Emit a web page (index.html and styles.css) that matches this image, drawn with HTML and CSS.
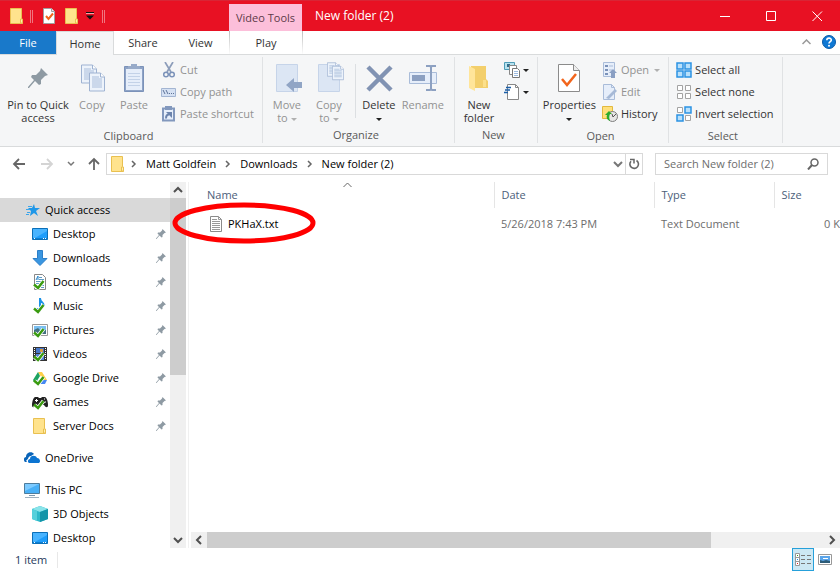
FILE: index.html
```html
<!DOCTYPE html>
<html lang="en">
<head>
<meta charset="utf-8">
<title>New folder (2)</title>
<link rel="stylesheet" href="styles.css">
</head>
<body>
<svg class="defs" aria-hidden="true">
  <symbol id="folder" viewBox="0 0 16 16"><path d="M1.500.500h11v10l1 1v4h-12z" fill="#ffe38d" stroke="#e9c050"/><path d="M11.500 15v-4h2v4z" fill="#fff0b0" stroke="#e9c050"/></symbol>
  <symbol id="pin" viewBox="0 0 20 20"><path d="M13 0 20 7 17 8 13 12 13 16 11 17 7 13 1 20 0 20 0 19 6 12 3 9 4 7 8 7 12 3z" fill="#8e9aa3"/></symbol>
  <symbol id="page" viewBox="0 0 16 19"><path d="M.500.500h11l4 4v14H.500z" fill="#edf3fb" stroke="#9fb3d2"/><path d="M11.500.500v4h4" fill="#fff" stroke="#9fb3d2"/><path d="M3 4.500h7M3 6.500h10M3 8.500h10M3 10.500h10M3 12.500h10M3 14.500h10" stroke="#a9bddb"/></symbol>
  <symbol id="chev-r" viewBox="0 0 8 8"><path d="m2 1 3 3-3 3" fill="none" stroke="#666" stroke-width="1.500"/></symbol>
  <symbol id="monitor" viewBox="0 0 16 16"><path d="M.500 2.500h15v11H.500z" fill="#1e9dfb" stroke="#0b6fb8"/><path d="M1 3h14v2L3 12H1z" fill="#49b4ff"/><path d="M1 12.500h14" stroke="#0c7fd2"/><path d="M2 12.500h1M11 12.500h1M13 12.500h1" stroke="#fff"/></symbol>
  <symbol id="tick" viewBox="0 0 16 16"><path d="m2.500 11 3.500 3 5.500-7" fill="none" stroke="#fff" stroke-width="4"/><path d="m2 10.500 4 3.500 5.500-7" fill="none" stroke="#3a9b10" stroke-width="2.500"/></symbol>
  <symbol id="props" viewBox="0 0 22 28"><path d="M.500.500h15l6 6v21H.500z" fill="#fff" stroke="#8b8b8b"/><path d="M15.500.500v6h6" fill="#eee" stroke="#8b8b8b"/><path d="m4 15 5 6 9-11" fill="none" stroke="#f2651c" stroke-width="2.500"/></symbol>
</svg>

<header class="titlebar">
  <div class="quick">
    <svg class="i16"><use href="#folder"/></svg>
    <span class="grip"></span>
    <button aria-label="Properties"><svg class="i16" viewBox="0 0 16 16"><path d="M2.500.500h8l3 3v12h-11z" fill="#fff" stroke="#a0a0a0"/><path d="M10.500.500v3h3" fill="#eee" stroke="#a0a0a0"/><path d="m5 8 2.500 3L12 5.500" fill="none" stroke="#f2651c" stroke-width="2"/></svg></button>
    <button aria-label="New folder"><svg class="i16"><use href="#folder"/></svg></button>
    <button aria-label="Customize toolbar" class="more"><svg viewBox="0 0 8 8" width="8" height="8"><path d="M0 0h8v1H0z" fill="#111"/><path d="M0 1h8v1H0z" fill="#f6a0a8"/><path d="M0 3.500h8l-4 4z" fill="#111"/></svg></button>
    <span class="grip last"></span>
  </div>
  <div class="context">Video Tools</div>
  <h1>New folder (2)</h1>
  <div class="winbtns">
    <button aria-label="Minimize"><svg viewBox="0 0 11 11"><path d="M0 5.500h10" /></svg></button>
    <button aria-label="Maximize"><svg viewBox="0 0 11 11"><path d="M.500.500h9v9h-9z"/></svg></button>
    <button aria-label="Close"><svg viewBox="0 0 11 11"><path d="m.500.500 9.500 9.500M10 .500.500 10"/></svg></button>
  </div>
</header>

<nav class="tabs">
  <button class="file">File</button>
  <button class="home">Home</button>
  <button class="share">Share</button>
  <button class="view">View</button>
  <button class="play">Play</button>
  <button class="collapse" aria-label="Collapse ribbon"><svg width="9" height="6" viewBox="0 0 9 6"><path d="M.500 5 4.500 1l4 4" fill="none" stroke="#999" stroke-width="1.500"/></svg></button>
  <button class="help" aria-label="Help"><svg width="14" height="14" viewBox="0 0 14 14"><circle cx="7" cy="7" r="6.500" fill="#0f78d4" stroke="#0a5ba8"/><path d="M4.800 5.200C4.800 2.500 9.300 2.500 9.300 5 9.300 6.600 7 6.700 7 8.600" fill="none" stroke="#fff" stroke-width="1.600"/><circle cx="7" cy="10.700" r="1" fill="#fff"/></svg></button>
</nav>

<section class="ribbon">
  <div class="group">
    <div class="tools">
      <button class="big w70"><svg viewBox="0 0 32 32"><use href="#pin" x="6" y="6" width="20" height="20"/></svg>Pin to Quick access</button>
      <button class="big w38 off"><svg viewBox="0 0 32 32"><use href="#page" x="5" y="2" width="16" height="20"/><use href="#page" x="13" y="10" width="16" height="20"/></svg>Copy</button>
      <button class="big w46 off"><svg viewBox="0 0 32 32"><path d="M6.500 4.500h19v25h-19z" fill="#8ea3c6" stroke="#7b92b9"/><path d="M8 7h16v21H8z" fill="#e6eefa"/><path d="M10 11.500h12M10 14.500h12M10 17.500h12M10 20.500h12M10 23.500h12" stroke="#c3d2e8"/><path d="M10 7V4h3V2h6v2h3v3z" fill="#98abc9"/></svg>Paste</button>
      <div class="stack">
        <button class="small off"><svg viewBox="0 0 16 16"><path d="m4 0 6 10M12 0 6 10" stroke="#8c9dba" stroke-width="1.700"/><circle cx="5" cy="12.500" r="2.300" fill="none" stroke="#7b92b9" stroke-width="1.500"/><circle cx="11" cy="12.500" r="2.300" fill="none" stroke="#7b92b9" stroke-width="1.500"/></svg>Cut</button>
        <button class="small off"><svg viewBox="0 0 16 16"><path d="M.500 4.500h14v8H.500z" fill="#d5e1f3" stroke="#a3b5d2"/><path d="m2 6 2 4M5 6l2 4M8 9.500h1M10 9.500h1M12 9.500h1" stroke="#5e7397"/></svg>Copy path</button>
        <button class="small off"><svg viewBox="0 0 16 16"><path d="M2 2.500h11v12H2z" fill="#e6eefa" stroke="#8298bd" stroke-width="2"/><path d="M4 0h7v4H4z" fill="#8298bd"/><path d="M5 12.500c0-3 1-4 3-4" fill="none" stroke="#6c84ad" stroke-width="2"/><path d="M5 6h6v6z" fill="#6c84ad"/></svg>Paste shortcut</button>
      </div>
    </div>
    <h2>Clipboard</h2>
  </div>
  <div class="group">
    <div class="tools">
      <button class="big w42 off"><svg viewBox="0 0 32 32"><path d="M5.500 2.500h21v27h-21z" fill="#dce6f4" stroke="#c6d4e9"/><path d="m15 23 8-7v4h8v6h-8v4z" fill="#91a5c5"/></svg>Move<span>to <i class="tri"></i></span></button>
      <button class="big w42 off"><svg viewBox="0 0 32 32"><path d="M5.500 2.500h21v27h-21z" fill="#dce6f4" stroke="#c6d4e9"/><use href="#page" x="14" y="0" width="12" height="15"/><use href="#page" x="19" y="3" width="12" height="16"/></svg>Copy<span>to <i class="tri"></i></span></button>
      <span class="rule"></span>
      <button class="big w42"><svg viewBox="0 0 32 32"><path d="m5 5 23 23M28 5 5 28" stroke="#8193b3" stroke-width="4.500"/></svg>Delete<span><i class="tri"></i></span></button>
      <button class="big w46 off"><svg viewBox="0 0 32 32"><path d="M2.500 10.500h27v11h-27z" fill="#e6eefa" stroke="#a9bcd9"/><path d="M5 13h13v6H5z" fill="#8ca0c1"/><path d="M19 4h4l1 1 1-1h4M19 28h4l1-1 1 1h4M24 4v24" fill="none" stroke="#8ca0c1" stroke-width="2"/></svg>Rename</button>
    </div>
    <h2>Organize</h2>
  </div>
  <div class="group">
    <div class="tools">
      <button class="big w42"><svg viewBox="0 0 32 32"><path d="M8 4h15v13l2 2v7H8z" fill="#f3cf6c"/><path d="m6 4 6 3v22l-6-3z" fill="#ffe59a"/><path d="M20 25v-7h3v7z" fill="#fce08b"/></svg>New folder</button>
      <div class="stack">
        <button class="small" aria-label="New item"><svg viewBox="0 0 16 16"><path d="M.500.500h10v7H.500z" fill="#b8e2ef" stroke="#4e9cb7"/><path d="M3 2h3v3H3z" fill="#326e8c"/><path d="M5.500 3.500h7v9h-7z" fill="#fff" stroke="#888"/><path d="M8.500 6.500h5l2 2v7h-7z" fill="#fff" stroke="#777"/><path d="M10 9.500h4M10 11.500h4M10 13.500h4" stroke="#9dbbe0"/></svg><i class="tri"></i></button>
        <button class="small" aria-label="Easy access"><svg viewBox="0 0 16 16"><path d="M3.500.500h8l3 3v12h-11z" fill="#fff" stroke="#888"/><path d="M11.500.500v3h3" fill="none" stroke="#888"/><path d="M2 3.500h5M1 6h5M0 8.500h4" stroke="#1c5fa8" stroke-width="1.500"/></svg><i class="tri"></i></button>
      </div>
    </div>
    <h2>New</h2>
  </div>
  <div class="group">
    <div class="tools">
      <button class="big w57"><svg viewBox="0 0 32 32"><use href="#props" x="5" y="2" width="22" height="28"/></svg>Properties<span><i class="tri"></i></span></button>
      <div class="stack">
        <button class="small off"><svg viewBox="0 0 16 16"><path d="M1.500.500h11v14h-11z" fill="#e6eefa" stroke="#a9bcd9"/><path d="M3 3h3v2H3zM3 7h3v2H3zM3 11h3v2H3z" fill="#7b92b9"/><path d="M7 4h4M7 8h3" stroke="#a9bcd9"/><path d="m11 7 4 4h-2v5h-4v-5H7z" fill="#8a9fc3"/></svg>Open<i class="tri"></i></button>
        <button class="small off"><svg viewBox="0 0 16 16"><path d="M1.500.500h8l3 3v12h-11z" fill="#e6eefa" stroke="#a9bcd9"/><path d="M9.500.500v3h3" fill="none" stroke="#a9bcd9"/><path d="m4 14 9-9 2 2-8 8z" fill="#a6b9d6"/></svg>Edit</button>
        <button class="small"><svg viewBox="0 0 16 16"><path d="M.500.500h10v12H.500z" fill="#ffe07b" stroke="#e2b93e"/><circle cx="10.500" cy="10.500" r="5" fill="#e6e6e6" stroke="#7d7d7d"/><path d="m10 8 1 3 3-3" fill="none" stroke="#555"/><path d="M8 15c-3-1-4-3-3-6H3l4-4 3 3H8c-1 2-1 4 0 7z" fill="#2cab2c"/></svg>History</button>
      </div>
    </div>
    <h2>Open</h2>
  </div>
  <div class="group">
    <div class="tools">
      <div class="stack">
        <button class="small"><svg viewBox="0 0 16 16"><path d="M1 1h6v6H1zM9 1h6v6H9zM1 9h6v6H1zM9 9h6v6H9z" fill="#b9e0fb" stroke="#2b92e4" stroke-width="1.500"/></svg>Select all</button>
        <button class="small"><svg viewBox="0 0 16 16"><path d="M1.500 1.500h5v5h-5zM9.500 1.500h5v5h-5zM1.500 9.500h5v5h-5zM9.500 9.500h5v5h-5z" fill="#fff" stroke="#a3a3a3"/></svg>Select none</button>
        <button class="small"><svg viewBox="0 0 16 16"><path d="M1.500 1.500h5v5h-5zM9.500 9.500h5v5h-5z" fill="#fff" stroke="#a3a3a3"/><path d="M9 1h6v6H9zM1 9h6v6H1z" fill="#b9e0fb" stroke="#2b92e4" stroke-width="1.500"/></svg>Invert selection</button>
      </div>
    </div>
    <h2>Select</h2>
  </div>
</section>

<section class="address">
  <div class="arrows">
    <button aria-label="Back"><svg viewBox="0 0 14 14"><path d="M13 7H2M7 2 2 7l5 5" fill="none" stroke="#666" stroke-width="1.800"/></svg></button>
    <button aria-label="Forward"><svg viewBox="0 0 14 14"><path d="M1 7h11M7 2l5 5-5 5" fill="none" stroke="#d4d4d4" stroke-width="1.800"/></svg></button>
    <button class="recent" aria-label="Recent locations"><svg viewBox="0 0 8 14"><path d="m1 5 3 3 3-3" fill="none" stroke="#777" stroke-width="1.500"/></svg></button>
    <button class="up" aria-label="Up"><svg viewBox="0 0 14 14"><path d="M7 13V2M2 7l5-5 5 5" fill="none" stroke="#666" stroke-width="1.800"/></svg></button>
  </div>
  <div class="path">
    <svg class="i16 crumb"><use href="#folder"/></svg>
    <svg class="sep"><use href="#chev-r"/></svg><a href="#matt">Matt Goldfein</a>
    <svg class="sep"><use href="#chev-r"/></svg><a href="#downloads">Downloads</a>
    <svg class="sep"><use href="#chev-r"/></svg><a href="#new">New folder (2)</a>
    <button class="drop" aria-label="Previous locations"><svg width="10" height="8" viewBox="0 0 10 8"><path d="m1 2 4 4 4-4" fill="none" stroke="#777" stroke-width="2"/></svg></button>
    <button class="refresh" aria-label="Refresh"><svg width="12" height="12" viewBox="0 0 12 12"><path d="M8.500 2.500A4.300 4.300 0 1 1 3 3.200" fill="none" stroke="#666" stroke-width="1.600"/><path d="M2 1.500h4v4" fill="none" stroke="#666" stroke-width="1.500"/></svg></button>
  </div>
  <label class="search"><input type="text" aria-label="Search New folder (2)" placeholder="Search New folder (2)"><svg width="12" height="12" viewBox="0 0 12 12"><circle cx="7.500" cy="4.500" r="3.500" fill="none" stroke="#666" stroke-width="1.500"/><path d="M5 7 1 11.500" stroke="#666" stroke-width="2"/></svg></label>
</section>

<main>
  <nav class="side">
    <a class="root active" href="#quick"><svg viewBox="0 0 16 16"><path d="m10 2 1 4h5l-4 3 2 5-4-3-4 3 1-5-3-3h4z" fill="#1f97e8"/><path d="M4 4.500h4M2 7.500h4M3 10.500h3M2 12.500h3" stroke="#3ba5ea"/></svg>Quick access</a>
    <a href="#desktop"><svg><use href="#monitor"/></svg>Desktop<svg class="pin"><use href="#pin"/></svg></a>
    <a href="#downloads"><svg viewBox="0 0 16 16"><path d="M5.500.500h5v8h4.500L8 15.500 1 8.500h4.500z" fill="#3a96e0" stroke="#2c7fc9"/></svg>Downloads<svg class="pin"><use href="#pin"/></svg></a>
    <a href="#documents"><svg viewBox="0 0 16 16"><path d="M2.500.500h8l3 3v12h-11z" fill="#fff" stroke="#888"/><path d="M7 3.500h3M7 5.500h5M4 7.500h8M4 9.500h8M9 11.500h3M9 13.500h3" stroke="#5d9bc5"/><path d="m4 6 2-4v4" fill="none" stroke="#2a87ca"/><use href="#tick"/></svg>Documents<svg class="pin"><use href="#pin"/></svg></a>
    <a href="#music"><svg viewBox="0 0 16 16"><path d="M7 0h2c0 4 5 4 3 9 0-3-2-4-3-4v7c0 4-6 3-5 0 0-2 2-2 3-2z" fill="#1a91e6"/><use href="#tick"/></svg>Music<svg class="pin"><use href="#pin"/></svg></a>
    <a href="#pictures"><svg viewBox="0 0 16 16"><path d="M.500 2.500h15v11H.500z" fill="#fff" stroke="#999"/><path d="M2 4h12v8H2z" fill="#79bff1"/><path d="m2 8 4-2 3 3 5-1v4H2z" fill="#426f80"/><use href="#tick"/></svg>Pictures<svg class="pin"><use href="#pin"/></svg></a>
    <a href="#videos"><svg viewBox="0 0 16 16"><path d="M1 1h14v14H1z" fill="#333"/><path d="M2.500 2v12M13.500 2v12" stroke="#fff" stroke-dasharray="1 1"/><path d="M4 2h8v5H4z" fill="#4777c8"/><path d="M4 8h8v6H4z" fill="#5282d5"/><path d="M8 3h3v3H8z" fill="#d99b45"/><use href="#tick"/></svg>Videos<svg class="pin"><use href="#pin"/></svg></a>
    <a href="#drive"><svg viewBox="0 0 16 16"><path d="M6 2h4l5 8h-4z" fill="#ffcf48"/><path d="m6 2 2 4-5 8-2-4z" fill="#1da362"/><path d="M6 10h9l-2 4H4z" fill="#4688f1"/><use href="#tick"/></svg>Google Drive<svg class="pin"><use href="#pin"/></svg></a>
    <a href="#games"><svg viewBox="0 0 16 16"><path d="M3 3h3l1 1h2l1-1h3c2 1 3 5 3 8 0 3-2 3-4 0H4c-2 3-4 3-4 0 0-3 1-7 3-8z" fill="#222"/><path d="M3 6.500h3M4.500 5v3M10 7h1M12 5h1M13 8h1" stroke="#fff"/><use href="#tick"/></svg>Games<svg class="pin"><use href="#pin"/></svg></a>
    <a href="#server"><svg><use href="#folder"/></svg>Server Docs<svg class="pin"><use href="#pin"/></svg></a>
    <a class="root gap" href="#onedrive"><svg viewBox="0 0 16 16"><path d="M1 12c-2-2-1-5 1-5 0-5 6-6 8-3L7 6c-2 0-3 2-3 3-2 1-2 2-1 3z" fill="#0a64b8"/><path d="M5 13c-2-1-1-4 1-4 0-4 6-4 7-1 3 0 4 4 2 5z" fill="#0c74d1"/></svg>OneDrive</a>
    <a class="root gap" href="#pc"><svg viewBox="0 0 16 16"><path d="M.500 1.500h15v10H.500z" fill="#48b0f7" stroke="#4d7c9c"/><path d="M1 2h14L1 9z" fill="#7ccaff"/><path d="M5 13.500h6" stroke="#7d98ad"/><path d="M1 15.500h14" stroke="#9fb1bf"/></svg>This PC</a>
    <a href="#objects"><svg viewBox="0 0 16 16"><path d="m0 3 8-3 8 3v10l-8 3-8-3z" fill="#2db9c9"/><path d="m0 3 8-3 8 3-8 3z" fill="#8ae4ea"/><path d="m8 6 8-3v10l-8 3z" fill="#1495a9"/><path d="m0 3 5 2v10l-5-2z" fill="#55d0db"/></svg>3D Objects</a>
    <a href="#desktop2"><svg><use href="#monitor"/></svg>Desktop</a>
  </nav>
  <div class="vscroll" aria-hidden="true">
    <svg viewBox="0 0 16 16"><path d="m4 10 4-4 4 4" /></svg>
    <div class="thumb"></div>
    <svg viewBox="0 0 16 16"><path d="m4 6 4 4 4-4" /></svg>
  </div>
  <section class="files">
    <div class="listing">
      <table>
        <colgroup><col class="c1"><col class="c2"><col class="c3"><col class="c4"></colgroup>
        <thead><tr><th>Name<svg class="sort" width="9" height="6" viewBox="0 0 9 6"><path d="M.500 5 4.500 1l4 4" fill="none" stroke="#666"/></svg></th><th>Date</th><th>Type</th><th>Size</th></tr></thead>
        <tbody><tr><td class="name"><span class="marked"><svg viewBox="0 0 16 16" width="16" height="16"><path d="M2.500.500h8l3 3v12h-11z" fill="#fff" stroke="#8b8b8b"/><path d="M10.500.500v3h3M4 3.500h5M4 5.500h8M4 7.500h8M4 9.500h8M4 11.500h8M4 13.500h8" fill="none" stroke="#999"/></svg>PKHaX.txt<svg class="ring" viewBox="0 0 144 42" width="144" height="42"><ellipse cx="72" cy="21" rx="69" ry="18" fill="none" stroke="#f00" stroke-width="5"/></svg></span></td><td>5/26/2018 7:43 PM</td><td>Text Document</td><td class="size">0 KB</td></tr></tbody>
      </table>
    </div>
    <div class="hscroll" aria-hidden="true">
      <svg viewBox="0 0 16 16"><path d="m10 4-4 4 4 4" /></svg>
      <div class="thumb"></div>
      <svg viewBox="0 0 16 16"><path d="m6 4 4 4-4 4" /></svg>
    </div>
  </section>
</main>

<footer>
  <span class="count">1 item</span>
  <button class="details" aria-label="Details view"><svg viewBox="0 0 16 13" width="16" height="13"><path d="M.500.500h4v12h-4zM.500 4.500h4M.500 8.500h4" fill="#fff" stroke="#999"/><path d="M2 2.500h1" stroke="#3a9b10"/><path d="M2 6.500h1" stroke="#1a91e6"/><path d="M2 10.500h1" stroke="#d22"/><path d="M6 2.500h4M12 2.500h4M6 6.500h4M12 6.500h4M6 10.500h4M12 10.500h4" stroke="#777"/></svg></button>
  <button class="thumbs" aria-label="Large icons view"><svg viewBox="0 0 14 11" width="14" height="11"><path d="M.500.500h13v10H.500z" fill="#fff" stroke="#999"/><path d="M2 2h10v7H2z" fill="#5ba5ea"/><path d="m2 6 3 1 3-1 4 1v2H2z" fill="#2c5c78"/><path d="M5 4.500h5" stroke="#fff"/></svg></button>
</footer>
</body>
</html>
```
FILE: styles.css
```css
* { box-sizing: border-box; }
body {
  margin: 0;
  height: 100vh;
  display: flex;
  flex-direction: column;
  overflow: hidden;
  background: #fff;
  color: #000;
  font: 11px/16px "Open Sans", "Noto Sans", sans-serif;
}
button { border: 0; padding: 0; margin: 0; background: none; font: inherit; color: inherit; }
a { color: inherit; text-decoration: none; }
svg { flex: none; display: block; }
h1, h2 { margin: 0; font: inherit; }
.defs { position: absolute; width: 0; height: 0; }
.i16 { width: 16px; height: 16px; }

.titlebar { display: flex; height: 31px; flex: none; background: #e81123; color: #fff; align-items: center; border-top: 1px solid #d92535; }
.quick { display: flex; align-items: center; width: 229px; padding-left: 9px; }
.grip { width: 3px; height: 13px; margin: 0 8px 0 5px; border: solid #f0757f; border-width: 0 1px; }
.grip.last { margin: 0 0 0 8px; }
.quick button + button { margin-left: 7px; }
.quick button.more { margin-left: 6px; }
.context { align-self: flex-end; width: 73px; height: 27px; line-height: 28px; text-align: center; background: #fcbfda; color: #5c3a48; white-space: nowrap; }
h1 { flex: 1; padding-left: 13px; font-size: 12px; }
.winbtns { display: flex; }
.winbtns button { width: 46px; height: 30px; display: grid; place-items: center; }
.winbtns svg { width: 11px; height: 11px; fill: none; stroke: #fff; }

.tabs { display: flex; height: 24px; flex: none; border-bottom: 1px solid #d9dbdc; color: #333; }
.file { width: 56px; background: #1979ca; color: #fff; }
.home { width: 58px; height: 24px; background: #f5f6f7; border: solid #d9dbdc; border-width: 1px 1px 0; }
.share { width: 58px; }
.view { width: 57px; }
.play { width: 74px; border: solid; border-width: 0 1px; border-image: linear-gradient(#bbb, #fff) 1; }
.collapse { margin-left: auto; padding: 0 9px 2px 0; }
.help { padding: 0 4px 2px 2px; }

.ribbon { display: flex; height: 92px; flex: none; background: #f5f6f7; border-bottom: 1px solid #d9dbdc; padding-top: 2px; color: #333; }
.group { display: flex; flex-direction: column; height: 86px; padding: 2px 8px 0 3px; border-right: 1px solid #e0e2e4; white-space: nowrap; }
.tools { display: flex; height: 70px; }
.group h2 { line-height: 22px; text-align: center; color: #5a5a5a; }
.big { display: flex; flex-direction: column; align-items: center; padding-top: 3px; line-height: 13px; white-space: normal; }
.big svg { width: 32px; height: 32px; margin-bottom: 4px; }
.w38 { width: 38px; }
.w42 { width: 42px; }
.w46 { width: 46px; }
.w57 { width: 57px; }
.w70 { width: 70px; }
.off { color: #929292; }
.tri { display: inline-block; border: 3px solid transparent; border-top-color: #222; border-bottom: 0; vertical-align: middle; }
.off .tri { border-top-color: #b0b0b0; }
.stack { display: flex; flex-direction: column; padding-left: 4px; }
.small { display: flex; align-items: center; height: 22px; gap: 3px; }
.small svg { width: 16px; height: 16px; }
.off.small .tri { margin-left: 2px; }
.rule { width: 1px; height: 54px; margin: 5px 2px 0 5px; background: #dcdfe2; }

.address { display: flex; flex: none; align-items: center; height: 35px; padding: 0 12px 1px 0; }
.arrows { display: flex; width: 106px; padding-left: 11px; gap: 12px; }
.arrows button { width: 16px; display: grid; place-items: center; }
.arrows svg { width: 14px; height: 14px; }
.arrows .recent, .arrows .recent svg { width: 8px; }
.arrows .up { width: 14px; }
.path { flex: 1; display: flex; align-items: center; height: 22px; border: 1px solid #d9d9d9; padding-left: 3px; white-space: nowrap; }
.crumb { margin-right: -3px; }
.sep { width: 8px; height: 8px; margin: 0 8px; }
.crumb + .sep { margin-left: 7px; }
.drop { margin-left: auto; padding-right: 2px; }
.refresh { width: 17px; height: 20px; border-left: 1px solid #d9d9d9; display: grid; place-items: center; }
.search { display: flex; align-items: center; width: 173px; height: 22px; margin-left: 12px; border: 1px solid #d9d9d9; padding: 0 8px; }
.search input { flex: 1; min-width: 0; border: 0; padding: 0; font: inherit; outline: 0; }
.search input::placeholder { color: #6d6d6d; opacity: 1; }

main { flex: 1; display: flex; min-height: 0; }
.side { width: 170px; padding-top: 16px; overflow: hidden; }
.side a { display: flex; align-items: center; gap: 5px; height: 24px; padding: 0 4px 0 32px; }
.side a.root { padding-left: 24px; }
.side .active { background: #d9d9d9; }
.side .gap { margin-top: 8px; }
.side svg { width: 16px; height: 16px; }
.side .pin { width: 10px; height: 10px; margin-left: auto; }
.vscroll { width: 16px; display: flex; flex-direction: column; background: #f0f0f0; }
.vscroll svg, .hscroll svg { width: 16px; height: 16px; fill: none; stroke: #505050; stroke-width: 2; }
.vscroll .thumb { height: 177px; margin-bottom: auto; background: #cdcdcd; }
.files { flex: 1; min-width: 0; display: flex; flex-direction: column; margin-left: 2px; border-left: 1px solid #f0f0f0; padding-left: 2px; }
.listing { flex: 1; overflow: hidden; margin-left: -20px; padding-left: 20px; }
table { width: 672px; table-layout: fixed; border-collapse: collapse; }
.c1 { width: 303px; }
.c2 { width: 160px; }
.c3 { width: 120px; }
th { position: relative; height: 26px; padding: 0 7px; text-align: left; font-weight: 400; color: #4c607a; border-right: 1px solid #e5e5e5; }
th:first-child { padding-left: 16px; }
th:last-child { border: 0; }
.sort { position: absolute; top: 0; left: 152px; }
td { height: 32px; padding: 0 7px; color: #6d6d6d; }
td.name { padding-left: 17px; color: #000; }
td.size { padding-right: 16px; text-align: right; white-space: nowrap; }
.marked { position: relative; display: flex; align-items: center; gap: 4px; }
.ring { position: absolute; left: -36px; top: -14px; }
.hscroll { display: flex; height: 16px; background: #f0f0f0; }
.hscroll .thumb { width: 504px; margin-right: auto; background: #cdcdcd; }

footer { display: flex; flex: none; height: 23px; align-items: center; padding-right: 8px; }
.count { padding: 0 10px 0 15px; border-right: 1px solid #e8e8e8; color: #1e395b; }
.details { margin-left: auto; width: 22px; height: 23px; display: grid; place-items: center; background: #cce8f4; border: 1px solid #26a0da; }
.thumbs { margin-left: 4px; }
```
